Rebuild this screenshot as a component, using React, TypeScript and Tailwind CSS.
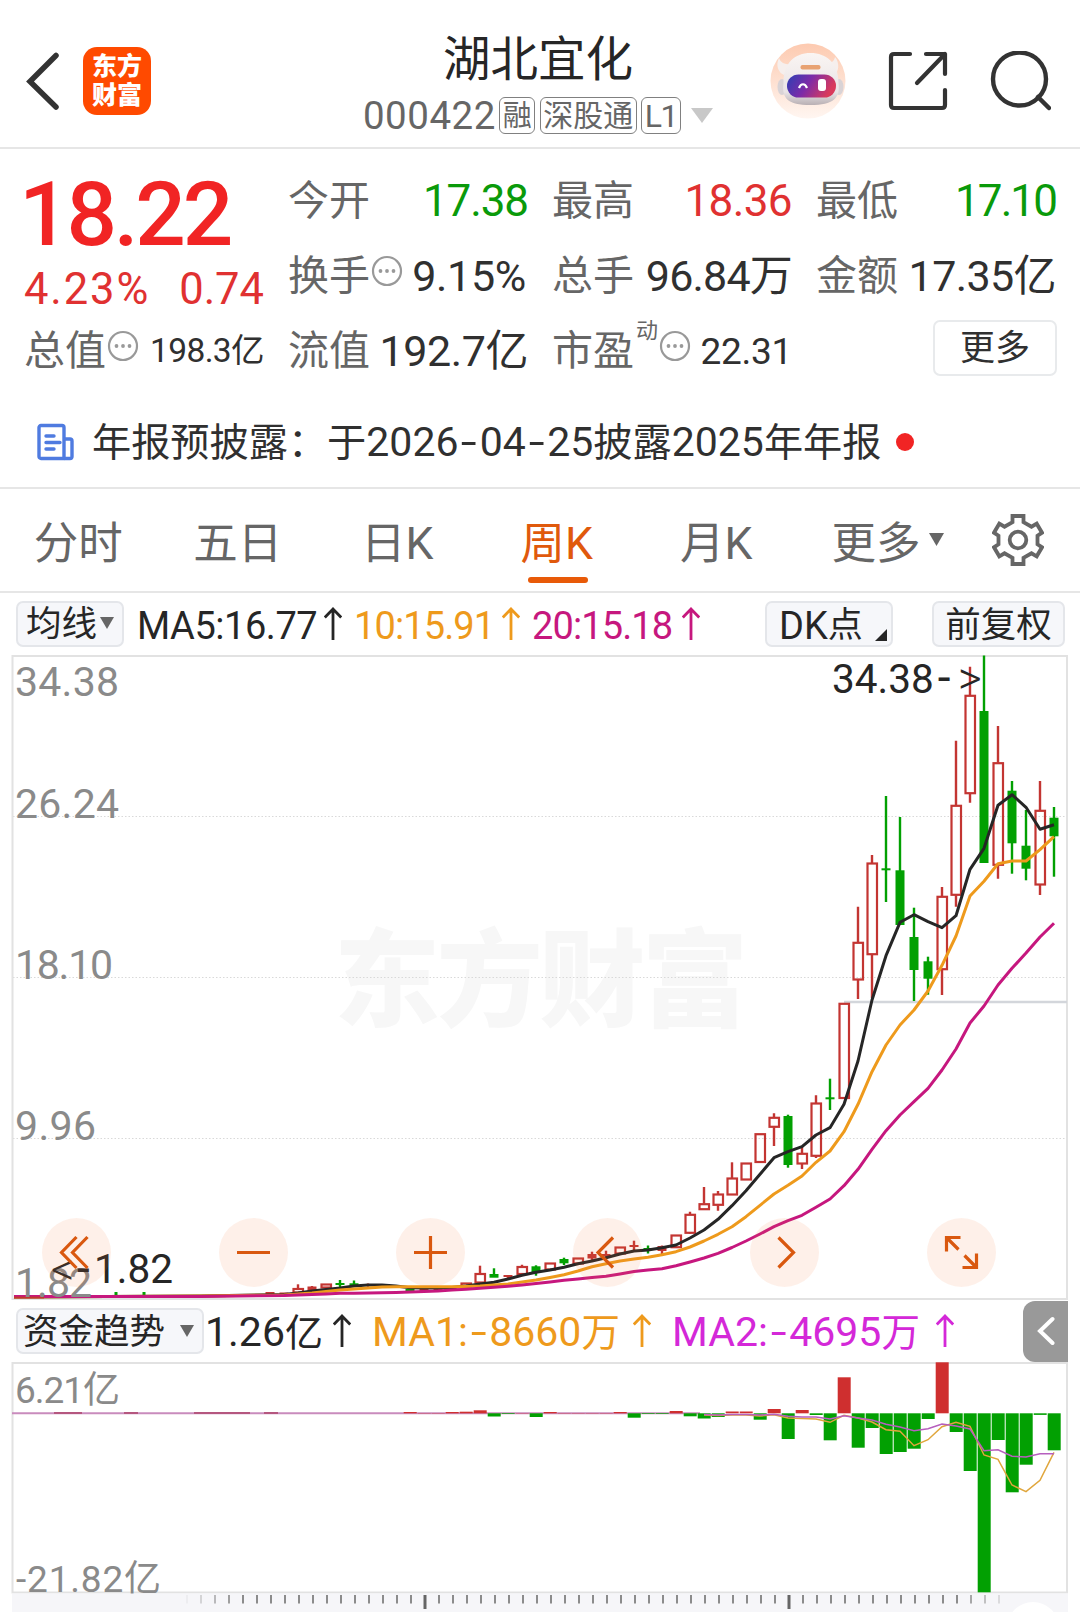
import type { ReactNode } from "react";

type Point = [x: number, y: number];
type Tone = "up" | "down";

// high, body top, body bottom, low, tone
type Candle = [number, number, number, number, Tone];

const STEP = 14;
const LAST_X = 1054;

const INK = "#262626";
const ORANGE = "#ee9a1c";
const MAGENTA = "#c6177e";
const GREEN = "#02a002";
const RED = "#c33532";

// Newest week first.
const CANDLES: Candle[] = [
  [807, 817.7, 836.3, 876.7, "down"],
  [781, 810.3, 885, 895, "up"],
  [810, 845.7, 868.7, 880.3, "down"],
  [781, 790.7, 843.3, 873.7, "down"],
  [726, 762.7, 865.3, 878.7, "up"],
  [655.5, 711, 863, 863, "down"],
  [666.7, 695.3, 793.7, 802.7, "up"],
  [740.7, 805.3, 895.3, 906.7, "up"],
  [887, 896.3, 969.7, 995, "up"],
  [956.7, 961.3, 978.7, 994.7, "down"],
  [907.7, 937, 970, 1001, "down"],
  [817, 870.3, 925, 925, "down"],
  [796, 869.3, 869.3, 902, "down"],
  [855, 863, 954.7, 998, "up"],
  [906.7, 942.3, 980, 999, "up"],
  [1003.3, 1003.3, 1098.5, 1098.5, "up"],
  [1078.7, 1098.3, 1098.3, 1110, "down"],
  [1095.3, 1103, 1156.3, 1158, "up"],
  [1146.7, 1153.3, 1164, 1169, "up"],
  [1114.7, 1116, 1165, 1167.7, "down"],
  [1113.3, 1117.3, 1127.3, 1146, "up"],
  [1133.7, 1133.7, 1162.5, 1162.5, "up"],
  [1163, 1163, 1180, 1180, "up"],
  [1162.3, 1178, 1195, 1195, "up"],
  [1191, 1194, 1205.3, 1210.7, "up"],
  [1187, 1203.7, 1209.7, 1209.7, "up"],
  [1211.7, 1214.3, 1233.3, 1234, "up"],
  [1235, 1235, 1247.7, 1247.7, "up"],
  [1245.5, 1247, 1250, 1254, "up"],
  [1245.5, 1249, 1249, 1253.5, "down"],
  [1240.7, 1246, 1246, 1251, "up"],
  [1247, 1247, 1254, 1254, "up"],
  [1250.7, 1255, 1255, 1258, "up"],
  [1251.7, 1255, 1257.5, 1261, "up"],
  [1258, 1258, 1264, 1264, "up"],
  [1257.7, 1260, 1262.3, 1265, "down"],
  [1263, 1263, 1270, 1270, "up"],
  [1265.3, 1266.3, 1272.7, 1275.7, "down"],
  [1264.7, 1266.5, 1274.5, 1274.7, "up"],
  [1275, 1276, 1276, 1279.3, "up"],
  [1268.3, 1275, 1276.7, 1276.7, "down"],
  [1265.7, 1273.5, 1283, 1283, "up"],
  [1283, 1283, 1287, 1287, "up"],
  [1289, 1289, 1289, 1289, "up"],
  [1289, 1289, 1289, 1289, "up"],
  [1290, 1290, 1290, 1290, "up"],
  [1290, 1290, 1290, 1290, "down"],
  [1286, 1286, 1286, 1286, "down"],
  [1285, 1285, 1285, 1285, "up"],
  [1283.5, 1285, 1285, 1288, "up"],
  [1280.5, 1284.3, 1284.3, 1287, "down"],
  [1280, 1284, 1284, 1287.5, "down"],
  [1284, 1284, 1288, 1288, "up"],
  [1286, 1287.5, 1289.5, 1291, "up"],
  [1284.3, 1288.5, 1293, 1293, "up"],
  [1293.5, 1293.5, 1293.5, 1293.5, "up"],
  [1293, 1293, 1293, 1293, "up"],
];

const MA5: number[] = [
  824.7, 829.3, 807.3, 794.7, 805.3, 848.3, 869.3, 915.7, 927.7, 921.7, 914.7, 922.3,
  955.7, 1000, 1061, 1104.3, 1127.7, 1135, 1146.7, 1151.7, 1157.7, 1174.3, 1190.7,
  1205.7, 1219.3, 1230, 1238, 1245, 1247.7, 1250, 1251, 1254, 1257.7, 1261, 1263.7,
  1267.3, 1270, 1272.3, 1275.3, 1279, 1282.3, 1284, 1286, 1287.5, 1288, 1288, 1287.7,
  1286, 1285, 1285, 1286, 1288, 1289.5, 1291, 1293, 1294.5,
];

const MA10: number[] = [
  836.7, 849.7, 861, 861, 863.7, 881.3, 896, 936, 965.3, 991, 1010, 1025, 1045, 1071.7,
  1104.3, 1131.7, 1151, 1162.3, 1176, 1185.3, 1194, 1205.3, 1216.7, 1226.7, 1234.3,
  1241, 1247, 1251.7, 1254.7, 1257.3, 1259, 1261, 1263.7, 1266.7, 1271, 1274.7, 1277.5,
  1280, 1282, 1284, 1285, 1286, 1286.5, 1286.7, 1286.7, 1286.7, 1286.7, 1286.8, 1287,
  1288, 1289, 1290, 1291.5, 1293, 1294, 1295,
];

const MA20: number[] = [
  923.3, 937, 953, 968.3, 985, 1006, 1023, 1049, 1070, 1088.3, 1101.7, 1115, 1130.7,
  1149.3, 1169.3, 1185.7, 1199, 1207.3, 1215.3, 1220.7, 1226.7, 1234, 1241, 1247.5,
  1253.3, 1258, 1262, 1265.7, 1268.7, 1270, 1271.5, 1274, 1276.3, 1277.5, 1279, 1280.3,
  1282, 1283.5, 1285, 1286.3, 1287.3, 1288.3, 1289.3, 1290, 1291, 1291.5, 1292, 1292.5,
  1292.7, 1293, 1293.3, 1293.3, 1294, 1294.5, 1295, 1295.5,
];

const ZERO_Y = 1413.3;

// End of each fund-flow bar, newest first; above the zero line is inflow.
const FLOWS: number[] = [
  1450.3, 1414.9, 1464.7, 1492.3, 1440, 1592.3, 1471, 1432, 1362.3, 1419, 1448.7, 1452,
  1454, 1428, 1447.7, 1377.3, 1440.3, 1415, 1410, 1439, 1409, 1419.7, 1411.5, 1411.5,
  1417, 1418.5, 1416.3, 1411, 1414, 1414, 1417.7, 1412, 1413, 1413, 1413, 1413, 1412,
  1417, 1413, 1414, 1416.5, 1410.3, 1411.7, 1412, 1413, 1413, 1412,
];

const FLOW_MA1: number[] = [
  1452.3, 1480.3, 1491.7, 1485, 1459.3, 1455, 1426.3, 1422.3, 1426.7, 1439.7, 1445.7,
  1431.3, 1429.7, 1422, 1418, 1415.3, 1422.3, 1419, 1418.5, 1418, 1414.7, 1416,
  1415, 1415, 1415.5, 1415,
];

const FLOW_MA2: number[] = [
  1453.7, 1453.7, 1457, 1456.3, 1449.7, 1450.7, 1429, 1426, 1424, 1428.7, 1430.7, 1427,
  1424.3, 1420, 1418, 1415.7, 1419, 1417, 1417, 1416.3, 1414.3, 1415, 1414.5, 1414.5,
  1415, 1414.5,
];

const AXIS_LABELS = [
  { value: "34.38", y: 695.5, width: 104 },
  { value: "26.24", y: 818, width: 104 },
  { value: "18.10", y: 979, width: 98 },
  { value: "9.96", y: 1140, width: 81 },
  { value: "1.82", y: 1297, width: 77 },
];

const TABS = ["分时", "五日", "日K", "周K", "月K"];

function series(values: number[], tail: Point[] = []) {
  const points = values.map((y, i): Point => [LAST_X - i * STEP, y]);
  return [...points, ...tail].map((p) => p.join(",")).join(" ");
}

function UpArrow({ className }: { className?: string }) {
  return (
    <svg viewBox="0 0 18 34" className={`h-[34px] w-[18px] shrink-0 ${className ?? ""}`}>
      <path
        d="M9 33V2M0.800 10.500L9 2l8.200 8.500"
        fill="none"
        stroke="currentColor"
        strokeWidth="2.800"
      />
    </svg>
  );
}

// Roboto's hyphen is short, so dates and negative values stretch it.
function Hyphen() {
  return <span className="mx-[5px] inline-block scale-x-140">-</span>;
}

function MoreDots() {
  return (
    <svg viewBox="0 0 32 32" className="mb-[10px] ml-[1px] h-[32px] w-[32px] shrink-0 text-[#999]">
      <circle cx="16" cy="16" r="14" fill="none" stroke="currentColor" strokeWidth="2.200" />
      <circle cx="9.500" cy="16" r="1.900" fill="currentColor" />
      <circle cx="16" cy="16" r="1.900" fill="currentColor" />
      <circle cx="22.500" cy="16" r="1.900" fill="currentColor" />
    </svg>
  );
}

function Cell({
  label,
  value,
  dots = false,
  mark,
  valueClass,
}: {
  label: string;
  value: ReactNode;
  dots?: boolean;
  mark?: string;
  valueClass: string;
}) {
  return (
    <div className="flex h-[75px] items-center justify-between pt-[3px] whitespace-nowrap">
      <span className="ml-[-1px] flex items-center text-[41px] text-[#666]">
        <span className="pt-[1px]">{label}</span>
        {mark ? <span className="mb-[40px] ml-[2px] text-[22px]">{mark}</span> : null}
        {dots ? <MoreDots /> : null}
      </span>
      <span className={valueClass}>{value}</span>
    </div>
  );
}

function Badge({ children }: { children: ReactNode }) {
  return (
    <span className="flex h-[37px] items-center rounded-[6px] border-[1.500px] border-[#808080] px-[2.500px] pt-[1px] text-[30px]">
      {children}
    </span>
  );
}

function Robot() {
  return (
    <svg viewBox="0 0 76 76" className="h-[76px] w-[76px]">
      <defs>
        <linearGradient id="halo" x1="0" y1="0" x2="0" y2="1">
          <stop offset="0" stopColor="#fdcab0" />
          <stop offset="1" stopColor="#fff6f1" />
        </linearGradient>
        <linearGradient id="visor" x1="0" y1="0" x2="1" y2="0.300">
          <stop offset="0" stopColor="#2c3fb4" />
          <stop offset="0.500" stopColor="#7c2ba8" />
          <stop offset="1" stopColor="#d93a5c" />
        </linearGradient>
        <linearGradient id="shell" x1="0" y1="0" x2="0" y2="1">
          <stop offset="0" stopColor="#faf5f3" />
          <stop offset="0.750" stopColor="#e9e4e6" />
          <stop offset="1" stopColor="#b9b0b4" />
        </linearGradient>
      </defs>
      <circle cx="38" cy="38" r="37.500" fill="url(#halo)" />
      <path
        d="M9 15c-4 8 0 15 5 17l10-11c-7 1-13 0-15-6zM65 14c5 6 4 15-1 18L53 21c7 0 11-2 12-7z"
        fill="#f6efed"
      />
      <ellipse cx="12" cy="44" rx="4.500" ry="8" fill="#d9d3d6" />
      <ellipse cx="69" cy="44" rx="4.500" ry="8" fill="#d9d3d6" />
      <path
        d="M13.500 40c0-20 11-30 27-30s28 10 28 30c2 15-5 22-28 22s-29-7-27-22z"
        fill="url(#shell)"
      />
      <rect x="30.500" y="22" width="20" height="4.500" rx="2" fill="#e8a272" />
      <rect x="17" y="31.500" width="49" height="23" rx="11.500" fill="url(#visor)" />
      <path d="M29 45c2-5 6-5 8 0" fill="none" stroke="#fff" strokeWidth="2.200" />
      <rect x="48" y="36" width="8" height="12" rx="3" fill="#fff" />
    </svg>
  );
}

function Header() {
  return (
    <header className="flex h-[149px] items-center justify-between border-b-2 border-[#e6e6e6] pr-[29px] pl-[24px]">
      <div className="flex w-[282px] items-center pt-[14px]">
        <svg viewBox="0 0 40 60" className="h-[60px] w-[40px]">
          <path
            d="M32 4.500L6 30.500 32 56"
            fill="none"
            stroke="#333"
            strokeWidth="5.500"
            strokeLinecap="round"
          />
        </svg>
        <div className="ml-[19px] flex h-[68px] w-[68px] flex-col items-center justify-center rounded-[14px] bg-[#ff4a00] text-[25px] leading-[29px] font-black text-white">
          <span>东方</span>
          <span>财富</span>
        </div>
      </div>

      <div className="flex flex-col items-center pt-[24px]">
        <h1 className="text-[47.500px] leading-[54px] text-[#262626]">湖北宜化</h1>
        <div className="mt-[6px] flex h-[46px] items-center gap-[4.500px] text-[38.500px] text-[#666]">
          <span className="mr-[-1px] pt-[2px] tracking-[0.500px]">000422</span>
          <Badge>
            <span className="text-[29px]">融</span>
          </Badge>
          <Badge>深股通</Badge>
          <Badge>
            <span className="text-[32px] tracking-[-1.500px]">L1</span>
          </Badge>
          <svg viewBox="0 0 22 15" className="ml-[6px] h-[15px] w-[22px]">
            <path d="M0 0h22L11 15z" fill="#c8c8c8" />
          </svg>
        </div>
      </div>

      <div className="flex w-[281px] items-center justify-between pt-[14px]">
        <Robot />
        <svg viewBox="0 0 60 60" className="h-[60px] w-[60px]">
          <g fill="none" stroke="#333" strokeWidth="4.200" strokeLinecap="round" strokeLinejoin="round">
            <path d="M22 3H6Q3 3 3 6v48q0 3 3 3h48q3 0 3-3V39" />
            <path d="M38 3h19v20M57 3L29 32" />
          </g>
        </svg>
        <svg viewBox="0 0 62 60" className="h-[60px] w-[62px]">
          <circle cx="30.500" cy="28" r="26.500" fill="none" stroke="#333" strokeWidth="4.400" />
          <path d="M49 46l11 11" stroke="#333" strokeWidth="4.500" strokeLinecap="round" />
        </svg>
      </div>
    </header>
  );
}

function Quote() {
  return (
    <section className="grid grid-cols-4 gap-x-[25px] pt-[13px] pr-[24px] pl-[25px]">
      <div>
        <div className="ml-[-6px] flex h-[102px] items-center pt-[2px] text-[89px] font-medium tracking-[-3.200px] text-[#f12424]">
          18.22
        </div>
        <div className="flex h-[48px] items-center justify-between pt-[3px] text-[43.500px] text-[#e03131]">
          <span className="ml-[-1px] tracking-[1.900px]">4.23%</span>
          <span>0.74</span>
        </div>
        <Cell
          label="总值"
          dots
          value="198.3亿"
          valueClass="text-[33.500px] tracking-[-0.600px] text-[#303030]"
        />
      </div>
      <div>
        <Cell
          label="今开"
          value="17.38"
          valueClass="text-[44px] tracking-[-1.100px] text-[#0a9a0a]"
        />
        <Cell
          label="换手"
          dots
          value="9.15%"
          valueClass="mr-[2px] text-[43px] tracking-[-0.300px] text-[#303030]"
        />
        <Cell
          label="流值"
          value="192.7亿"
          valueClass="text-[43px] tracking-[-0.400px] text-[#303030]"
        />
      </div>
      <div>
        <Cell
          label="最高"
          value="18.36"
          valueClass="text-[44px] tracking-[-0.600px] text-[#e03131]"
        />
        <Cell
          label="总手"
          value="96.84万"
          valueClass="text-[43px] tracking-[-0.800px] text-[#303030]"
        />
        <Cell
          label="市盈"
          mark="动"
          dots
          value="22.31"
          valueClass="text-[37px] tracking-[-0.300px] text-[#303030]"
        />
      </div>
      <div>
        <Cell
          label="最低"
          value="17.10"
          valueClass="text-[44px] tracking-[-1.900px] text-[#0a9a0a]"
        />
        <Cell
          label="金额"
          value="17.35亿"
          valueClass="text-[43px] tracking-[-0.600px] text-[#303030]"
        />
        <div className="flex h-[75px] items-center justify-end">
          <button className="mr-[-1px] mb-[4px] flex h-[56px] w-[124px] items-center justify-center rounded-[7px] border-2 border-[#e8eaec] pt-[2px] text-[35px] text-[#303030]">
            更多
          </button>
        </div>
      </div>
    </section>
  );
}

function Notice() {
  return (
    <section className="flex h-[102px] items-center border-b-2 border-[#e6e6e6] pt-[9px] pl-[36px] whitespace-nowrap">
      <svg viewBox="0 0 38 38" className="h-[38px] w-[38px]">
        <g fill="none" stroke="#4f7be0" strokeWidth="3.400" strokeLinejoin="round">
          <path d="M5 2.500h21a2 2 0 0 1 2 2V35.500H5a2 2 0 0 1-2-2V4.500a2 2 0 0 1 2-2z" />
          <path d="M28 16h6a2 2 0 0 1 2 2v15.500a2 2 0 0 1-2 2h-6" />
          <path d="M10 13h8M10 19.500h14M10 26h8" strokeLinecap="round" />
        </g>
      </svg>
      <span className="ml-[18px] pt-[3px] text-[39.200px] text-[#303030]">
        年报预披露：于
        <span className="text-[41px]">
          2026
          <Hyphen />
          04
          <Hyphen />
          25
        </span>
        披露
        <span className="text-[41px]">2025</span>年年报
      </span>
      <span className="ml-[15px] h-[18px] w-[18px] rounded-full bg-[#f12424]" />
    </section>
  );
}

function PeriodTabs() {
  return (
    <nav className="flex h-[104px] border-b-2 border-[#e6e6e6] text-[44.500px] text-[#666]">
      {TABS.map((tab) => (
        <div
          key={tab}
          className={
            tab === "周K"
              ? "relative flex w-[159.500px] items-center justify-center pt-[8px] text-[#e0590c]"
              : "flex w-[159.500px] items-center justify-center pt-[8px]"
          }
        >
          <span className="mr-[3px]">{tab}</span>
          {tab === "周K" ? (
            <span className="absolute bottom-[8px] h-[6px] w-[60px] rounded-full bg-[#e85a08]" />
          ) : null}
        </div>
      ))}
      <div className="flex flex-1 items-center pt-[8px] pl-[34px]">
        更多
        <svg viewBox="0 0 15 13" className="mb-[9px] ml-[8px] h-[13px] w-[15px]">
          <path d="M0 0h15L7.500 13z" fill="#666" />
        </svg>
      </div>
      <svg viewBox="0 0 52 54" className="mt-[24px] mr-[36px] h-[54px] w-[52px]">
        <g fill="none" stroke="#666" strokeWidth="3.800">
          <path d="M20.500 3h11v6.200l8 4.500 5.200-3 5.300 9-4.500 3v8.600l4.500 3-5.300 9-5.200-3-8 4.500V51h-11v-6.200l-8-4.500-5.200 3-5.300-9 4.500-3v-8.600l-4.500-3 5.300-9 5.200 3 8-4.500z" />
          <circle cx="26" cy="27" r="8.300" />
        </g>
      </svg>
    </nav>
  );
}

function Toolbar() {
  return (
    <div className="flex h-[62px] items-center px-[16px] text-[38px] whitespace-nowrap">
      <button className="flex h-[46px] w-[108px] shrink-0 items-center rounded-[7px] border-2 border-[#e4e6ea] bg-[#f6f7fa] pt-[2px] pl-[8px] text-[35.500px] text-[#262626]">
        均线
        <svg viewBox="0 0 14 12" className="mb-[4px] ml-[3px] h-[12px] w-[14px]">
          <path d="M0 0h14L7 12z" fill="#666" />
        </svg>
      </button>
      <span className="ml-[13px] w-[187px] pt-[3px] tracking-[-0.450px] text-[#262626]">MA5:16.77</span>
      <UpArrow className="text-[#262626]" />
      <span className="ml-[12px] w-[148px] pt-[3px] tracking-[-0.900px] text-[#ee9a1c]">10:15.91</span>
      <UpArrow className="text-[#ee9a1c]" />
      <span className="ml-[12px] w-[150px] pt-[3px] tracking-[-0.900px] text-[#c6177e]">20:15.18</span>
      <UpArrow className="text-[#c6177e]" />
      <button className="relative ml-auto flex h-[46px] w-[128px] shrink-0 items-center rounded-[7px] border-2 border-[#e4e6ea] bg-[#f6f7fa] pt-[3px] pl-[12px] text-[#262626]">
        DK<span className="text-[35px]">点</span>
        <svg viewBox="0 0 12 12" className="absolute right-[4px] bottom-[4px] h-[12px] w-[12px]">
          <path d="M12 0v12H0z" fill="#262626" />
        </svg>
      </button>
      <button className="mr-[-1px] ml-[39px] flex h-[46px] w-[133px] shrink-0 items-center justify-center rounded-[7px] border-2 border-[#e4e6ea] bg-[#f6f7fa] pt-[3px] text-[35.500px] text-[#262626]">
        前复权
      </button>
    </div>
  );
}

function CandleShape({ candle, x }: { candle: Candle; x: number }) {
  const [high, top, bottom, low, tone] = candle;
  const color = tone === "up" ? RED : GREEN;
  const flat = bottom - top < 4;

  if (flat || tone === "down") {
    return (
      <g fill={color}>
        <rect x={x - 1.200} y={high} width="2.400" height={Math.max(low - high, 0)} />
        <rect x={x - 4.500} y={top - (flat ? 1 : 0)} width="9" height={bottom - top + (flat ? 2 : 0)} />
      </g>
    );
  }
  return (
    <g stroke={color} strokeWidth="2.400" fill="none">
      <path d={`M${x} ${high}V${top}M${x} ${bottom}V${low}`} />
      <rect x={x - 4.500} y={top + 0.500} width="9.500" height={bottom - top - 1} strokeWidth="2.200" />
    </g>
  );
}

function RoundButton({ children }: { children: ReactNode }) {
  return (
    <button className="h-[69px] w-[69px] rounded-full bg-[#f77a3a]/11">
      <svg viewBox="-34.500 -34.500 69 69" className="h-[69px] w-[69px]">
        <g fill="none" stroke="#d9580f" strokeWidth="3.200">
          {children}
        </g>
      </svg>
    </button>
  );
}

function PriceChart() {
  return (
    <div className="relative h-[645px]">
      <svg viewBox="0 655 1080 645" className="block h-[645px] w-[1080px]">
        <text x="334" y="1018" fontSize="106" fontWeight="900" textLength="414" fill="#f7f7f7">
          东方财富
        </text>
        <g stroke="#d9d9d9" strokeWidth="1.200" strokeDasharray="1.500 2">
          <path d="M13 816.500H1067M13 977.500H1067M13 1138.500H1067" />
        </g>
        <rect x="12.500" y="656" width="1054.500" height="643" fill="none" stroke="#e2e2e2" strokeWidth="2" />
        <path d="M844 1002H1067" stroke="#d3d6db" strokeWidth="2.500" />

        {CANDLES.map((candle, i) => (
          <CandleShape key={i} candle={candle} x={LAST_X - i * STEP} />
        ))}
        <path d="M116 1292v4M144 1292v4" stroke={GREEN} strokeWidth="3" />

        <g fill="none" strokeWidth="3" strokeLinejoin="round">
          <polyline points={series(MA5, [[200, 1296], [14, 1297]])} stroke={INK} />
          <polyline points={series(MA10, [[200, 1296], [14, 1297]])} stroke={ORANGE} />
          <polyline points={series(MA20, [[200, 1296.5], [14, 1296.5]])} stroke={MAGENTA} />
        </g>
        <path d="M14 1297.500h30" stroke="#c33532" strokeWidth="2" />

        <g fontSize="41" fill="#8a8a8a">
          {AXIS_LABELS.map((label) => (
            <text key={label.value} x="15" y={label.y} textLength={label.width}>
              {label.value}
            </text>
          ))}
        </g>
        <g fontSize="40.500" fill={INK}>
          <text x="832" y="693">
            34.38
            <tspan dx="4" fontSize="46">-</tspan>
            <tspan x="958" y="694" fontSize="46" fontWeight="300">&gt;</tspan>
          </text>
          <text x="51" y="1285" fontSize="46" fontWeight="300">
            &lt;
            <tspan x="77" y="1284" fontWeight="400">-</tspan>
            <tspan x="94" y="1283" fontSize="40.500" fontWeight="400">1.82</tspan>
          </text>
        </g>
      </svg>

      <div className="absolute bottom-[13px] left-[42px] flex gap-[108px]">
        <RoundButton>
          <path d="M0-15.500L-15 0 0 15.500M11-15.500L-4 0l15 15.500" />
        </RoundButton>
        <RoundButton>
          <path d="M-16.500 0h33" />
        </RoundButton>
        <RoundButton>
          <path d="M-16.500 0h33M0-16.500v33" />
        </RoundButton>
        <RoundButton>
          <path d="M5.500-15L-9.500 0l15 15" />
        </RoundButton>
        <RoundButton>
          <path d="M-6-15L9 0-6 15" />
        </RoundButton>
        <RoundButton>
          <path d="M-1-15h-14v14M-15-15L-3-3M1 15h14V1M15 15L3 3" />
        </RoundButton>
      </div>
    </div>
  );
}

function FlowToolbar() {
  return (
    <div className="flex h-[62px] items-center pl-[16px] text-[41px] whitespace-nowrap">
      <button className="flex h-[46px] w-[188px] shrink-0 items-center rounded-[7px] border-2 border-[#e4e6ea] bg-[#f6f7fa] pt-[3px] pl-[5px] text-[35.500px] text-[#262626]">
        资金趋势
        <svg viewBox="0 0 14 12" className="mb-[3px] ml-[15px] h-[12px] w-[14px]">
          <path d="M0 0h14L7 12z" fill="#666" />
        </svg>
      </button>
      <span className="ml-[1px] w-[128px] pt-[2px] text-[#262626]">
        1.26<span className="text-[38px]">亿</span>
      </span>
      <UpArrow className="text-[#262626]" />
      <span className="ml-[21px] w-[261px] pt-[2px] text-[#ee9a1c]">
        MA1:
        <Hyphen />
        8660<span className="text-[38.500px]">万</span>
      </span>
      <UpArrow className="text-[#ee9a1c]" />
      <span className="ml-[21px] w-[264px] pt-[2px] text-[#d428d8]">
        MA2:
        <Hyphen />
        4695<span className="text-[38.500px]">万</span>
      </span>
      <UpArrow className="text-[#d428d8]" />
      <button className="mr-[12px] ml-auto flex h-[61px] w-[45px] items-center justify-center rounded-l-[12px] bg-[#999]">
        <svg viewBox="0 0 18 30" className="h-[30px] w-[18px]">
          <path
            d="M15.500 3L3 15l12.500 12"
            fill="none"
            stroke="#fff"
            strokeWidth="4"
            strokeLinecap="round"
          />
        </svg>
      </button>
    </div>
  );
}

function FlowChart() {
  const ticks = Array.from({ length: 59 }, (_, i) => i - 17);

  return (
    <svg viewBox="0 1362 1080 250" className="block h-[250px] w-[1080px]">
      <rect x="12.500" y="1363" width="1054.500" height="229.500" fill="none" stroke="#e2e2e2" strokeWidth="2" />
      <path d={`M12 ${ZERO_Y}H700`} stroke="#c98bbd" strokeWidth="2" />
      <path
        d="M54 1413h28M124 1413h14M194 1413h56M264 1413h14"
        stroke="#b5577f"
        strokeWidth="2"
      />
      {FLOWS.map((end, i) => (
        <rect
          key={i}
          x={LAST_X - i * STEP - 6.3}
          y={Math.min(end, ZERO_Y)}
          width="13"
          height={Math.abs(end - ZERO_Y)}
          fill={end < ZERO_Y ? "#cf2f2f" : GREEN}
        />
      ))}
      <g fill="none" strokeWidth="1.500">
        <polyline points={series(FLOW_MA1)} stroke="#e0a63c" />
        <polyline points={series(FLOW_MA2)} stroke="#b65fbe" />
      </g>
      <g fontSize="37" fill="#8a8a8a">
        <text x="15" y="1402.500" textLength="105">6.21亿</text>
        <text x="16" y="1591.500" textLength="145">-21.82亿</text>
      </g>

      <rect x="12" y="1593.500" width="1056" height="18.500" fill="#f6f6f9" />
      <circle cx="1033" cy="1628" r="26" fill="#fff" />
      {ticks.map((k) => {
        const major = k === 0 || k === 26;
        const fade = Math.min(1, (k + 17.3) / 4, (42 - k) / 4);
        return (
          <rect
            key={k}
            x={425 + k * STEP - (major ? 1.5 : 1)}
            y="1595"
            width={major ? 3 : 2}
            height={major ? 14 : 8.5}
            fill={major ? "#666" : "#8c8c8c"}
            opacity={fade}
          />
        );
      })}
    </svg>
  );
}

export default function App() {
  return (
    <main className="h-[1612px] w-[1080px] overflow-hidden bg-white font-[Roboto,'Noto_Sans_CJK_SC',sans-serif] leading-none">
      <Header />
      <Quote />
      <Notice />
      <PeriodTabs />
      <Toolbar />
      <PriceChart />
      <FlowToolbar />
      <FlowChart />
    </main>
  );
}
